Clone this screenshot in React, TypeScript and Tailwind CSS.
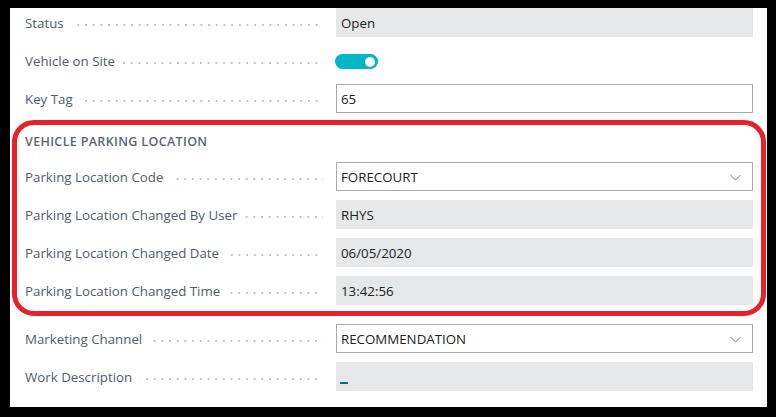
type Field = {
  label: string;
  value?: string;
  kind: 'readonly' | 'input' | 'select' | 'toggle' | 'blob';
};

const topFields: Field[] = [
  { label: 'Status', value: 'Open', kind: 'readonly' },
  { label: 'Vehicle on Site', kind: 'toggle' },
  { label: 'Key Tag', value: '65', kind: 'input' },
];

const parkingFields: Field[] = [
  { label: 'Parking Location Code', value: 'FORECOURT', kind: 'select' },
  { label: 'Parking Location Changed By User', value: 'RHYS', kind: 'readonly' },
  { label: 'Parking Location Changed Date', value: '06/05/2020', kind: 'readonly' },
  { label: 'Parking Location Changed Time', value: '13:42:56', kind: 'readonly' },
];

const bottomFields: Field[] = [
  { label: 'Marketing Channel', value: 'RECOMMENDATION', kind: 'select' },
  { label: 'Work Description', kind: 'blob' },
];

function Chevron() {
  return (
    <svg width="11" height="7" viewBox="0 0 11 7" className="mt-[-1px]">
      <path d="M0.5 1 L5.5 6 L10.5 1" fill="none" stroke="#7a7a7a" strokeWidth="1" />
    </svg>
  );
}

function FieldControl({ field }: { field: Field }) {
  if (field.kind === 'toggle') {
    return (
      <div className="flex items-center h-full pt-[2px]">
        <div className="w-[43px] h-[15px] rounded-full bg-[#00b7c3] flex items-center justify-end pr-[3px] -ml-[1px]">
          <div className="w-[10px] h-[10px] rounded-full bg-white" />
        </div>
      </div>
    );
  }
  if (field.kind === 'input' || field.kind === 'select') {
    return (
      <div className="h-full border border-[#a9a9a9] bg-white flex items-center pl-[4px] pr-[11px] pt-[2px]">
        <span className="flex-1">{field.value}</span>
        {field.kind === 'select' && <Chevron />}
      </div>
    );
  }
  if (field.kind === 'blob') {
    return (
      <div className="h-full bg-[#e6e7e8] flex items-end pl-[4px] pb-[7px]">
        <span className="w-[8px] h-[2px] bg-[#0b6a73]" />
      </div>
    );
  }
  return (
    <div className="h-full bg-[#e6e7e8] flex items-center pl-[5px] pt-[2px]">
      <span>{field.value}</span>
    </div>
  );
}

function FieldRow({ field }: { field: Field }) {
  return (
    <div className="flex h-[29px] mb-[9px]">
      <div className="w-[298px] flex items-center pt-[2px] text-[#505c6d]">
        <span className="whitespace-nowrap">{field.label}</span>
        <span className="flex-1 ml-[8px] mt-[3px] h-[2px] bg-[linear-gradient(to_right,#c4c4c4_2px,transparent_2px)] bg-[length:7.7px_2px] bg-repeat-x bg-right" />
      </div>
      <div className="w-[13px]" />
      <div className="w-[417px] text-[#212121]">
        <FieldControl field={field} />
      </div>
    </div>
  );
}

export default function App() {
  return (
    <div className="relative w-[776px] h-[417px] bg-black pl-[10px] pt-[8px] pr-[9px] pb-[10px] font-['Open_Sans',sans-serif] text-[13.3px]">
      <div className="w-full h-full bg-white pl-[15px] overflow-hidden">
        {topFields.map((f) => (
          <FieldRow key={f.label} field={f} />
        ))}
        <div className="h-[40px] flex items-center text-[12.5px] font-semibold tracking-[0.35px] text-[#5a6573]">
          VEHICLE PARKING LOCATION
        </div>
        {parkingFields.map((f) => (
          <FieldRow key={f.label} field={f} />
        ))}
        <div className="h-[10px]" />
        {bottomFields.map((f) => (
          <FieldRow key={f.label} field={f} />
        ))}
      </div>
      {/* annotation outline */}
      <div className="absolute left-[12px] top-[120px] w-[754px] h-[196px] border-[5px] border-[#e8202a] rounded-[22px] pointer-events-none" />
    </div>
  );
}
